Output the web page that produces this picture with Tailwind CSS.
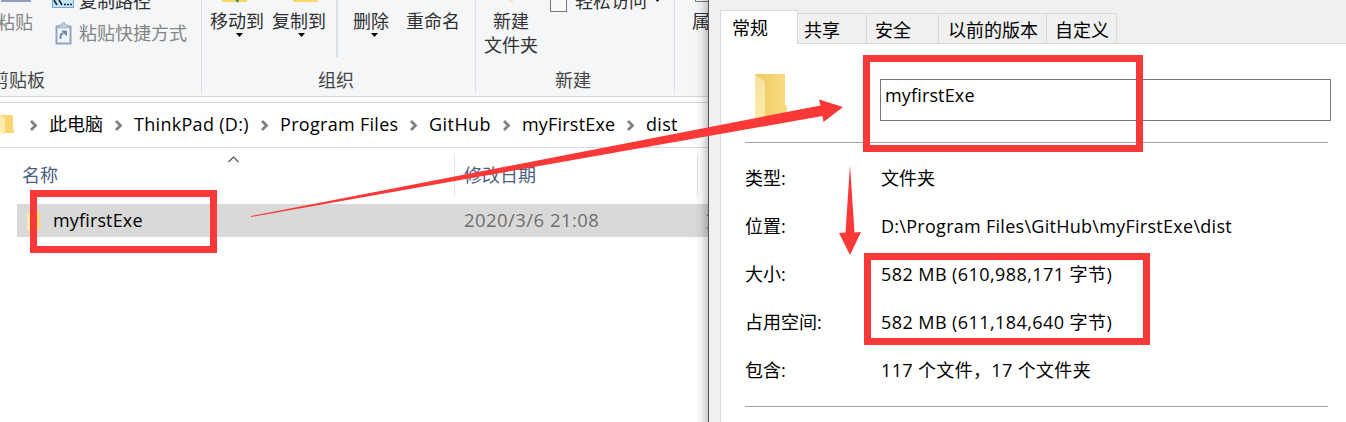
<!DOCTYPE html>
<html lang="zh-CN">
<head>
<meta charset="utf-8">
<title>myfirstExe</title>
<script src="https://cdn.jsdelivr.net/npm/@tailwindcss/browser@4"></script>
</head>
<body class="bg-white">
<div class="relative flex w-[1346px] h-[422px] overflow-hidden whitespace-nowrap font-['Open_Sans','Noto_Sans_CJK_SC',sans-serif] text-[18px] leading-6 text-black">

  <!-- Explorer window -->
  <main class="relative flex flex-col w-[708px] shrink-0 overflow-hidden bg-white">
    <section class="flex h-[97px] shrink-0 bg-[#f4f6f8] border-b border-[#d4d6d9] text-[#303030] overflow-hidden">
      <div class="flex flex-col w-[201px] shrink-0">
        <div class="flex h-[68px]">
          <div class="w-[54px] text-[#858585]">
            <div class="ml-[1px] w-[30px] h-[2px] bg-[#929fb7]"></div>
            <div class="-ml-[3px] mt-[8px]">粘贴</div>
          </div>
          <div>
            <div class="flex h-[15px] items-start -ml-[2px]">
              <svg class="shrink-0" width="22" height="9" viewBox="0 0 22 9"><rect x=".5" y="-4" width="21" height="11.5" fill="#c5e3fb" stroke="#75a9d6"/><path d="M2 0l3 5M7 0l3 5" stroke="#16263c" stroke-width="1.6"/><path d="M12 4.500h2M15 4.500h2M18 4.500h2" stroke="#16263c" stroke-width="1.6"/></svg>
              <span class="-mt-[11px] ml-[5px]">复制路径</span>
            </div>
            <div class="flex h-[38px] items-center text-[#858585]">
              <svg class="shrink-0 ml-[1px] -mt-[2px]" width="17" height="24" viewBox="0 0 17 24"><path d="M1.500 5.500h14v17h-14z" fill="#f2f6fc" stroke="#93a3be" stroke-width="2"/><path d="M4 7V4h2.500l1-2.500h2L10.500 4H13v3z" fill="#c4ccda" stroke="#93a3be" stroke-width=".7"/><path d="M5.500 18v-3q0-2.500 3-2.500" fill="none" stroke="#7089ad" stroke-width="2"/><path d="M6 9.500h6v6z" fill="#7089ad"/></svg>
              <span class="ml-[7px] -mt-[2px]">粘贴快捷方式</span>
            </div>
          </div>
        </div>
        <div class="-ml-[9px] text-[#444]">剪贴板</div>
      </div>
      <div class="w-px h-[94px] bg-[#dfe1e4] shrink-0"></div>
      <div class="flex flex-col w-[273px] shrink-0">
        <div class="flex h-[68px]">
          <div class="flex flex-col ml-[8px] w-[54px]">
            <svg class="ml-[12px]" width="26" height="3" viewBox="0 0 26 3"><path d="M0 0h25v2H0z" fill="#f9d865"/><path d="M13 0h4l-1 3z" fill="#428b58"/></svg>
            <div class="mt-[6px]">移动到</div>
            <svg class="ml-[26px]" width="7" height="4" viewBox="0 0 7 4"><path d="M0 0h7L3.500 4z"/></svg>
          </div>
          <div class="flex flex-col ml-[8px] w-[54px]">
            <svg class="ml-[21px]" width="26" height="3" viewBox="0 0 26 3"><path d="M0 0h25v2H0z" fill="#f9d865"/></svg>
            <div class="mt-[6px]">复制到</div>
            <svg class="ml-[26px]" width="7" height="4" viewBox="0 0 7 4"><path d="M0 0h7L3.500 4z"/></svg>
          </div>
          <div class="ml-[10px] w-[2px] h-[57px] bg-[#dcdfe2]"></div>
          <div class="flex flex-col ml-[15px] mt-[9px] w-[36px]">
            <div>删除</div>
            <svg class="ml-[18px]" width="7" height="4" viewBox="0 0 7 4"><path d="M0 0h7L3.500 4z"/></svg>
          </div>
          <div class="ml-[17px] mt-[9px]">重命名</div>
        </div>
        <div class="pl-[116px] text-[#444]">组织</div>
      </div>
      <div class="w-px h-[94px] bg-[#dfe1e4] shrink-0"></div>
      <div class="flex flex-col w-[198px] shrink-0">
        <div class="flex h-[68px]">
          <div class="ml-[8px] w-[54px] text-center">
            <div class="mx-auto mt-0 h-[2px] w-[4px] bg-[#f6e4bd]"></div>
            <div class="mt-[7px]">新建</div>
            <div>文件夹</div>
          </div>
          <div class="flex ml-[12px] items-start">
            <div class="-mt-[5px] w-[17px] h-[17px] border border-[#777] bg-[#fafafa]"></div>
            <div class="-mt-[11px] ml-[8px]">轻松访问</div>
            <svg class="-mt-[2px] ml-[7px]" width="7" height="4" viewBox="0 0 7 4"><path d="M0 0h7L3.500 4z"/></svg>
          </div>
        </div>
        <div class="pl-[79px] text-[#444]">新建</div>
      </div>
      <div class="w-px h-[94px] bg-[#dfe1e4] shrink-0"></div>
      <div class="pl-[17px]">
        <div class="ml-[3px] w-[17px] h-[2px] border-b border-l border-[#777]"></div>
        <div class="mt-[7px]">属性</div>
      </div>
    </section>

    <!-- Address bar -->
    <nav class="mt-[5px] flex h-[46px] shrink-0 items-center border-y border-[#d9d9d9] tracking-[.3px]">
      <svg width="15" height="22" viewBox="0 0 15 22"><path d="M0 1h12q1 0 1 1v13l1 1v3H0z" fill="#f7d774"/><path d="M0 1l5 3v17L0 19z" fill="#ffebad"/></svg>
      <svg class="ml-[15px]" width="8" height="11" viewBox="0 0 8 11"><path d="M1 1l4.500 4.500L1 10" fill="none" stroke="#808080" stroke-width="2.800"/></svg>
      <span class="ml-[11px] -mt-[2px] w-[54px] tracking-normal">此电脑</span>
      <svg class="ml-[12px]" width="8" height="11" viewBox="0 0 8 11"><path d="M1 1l4.500 4.500L1 10" fill="none" stroke="#808080" stroke-width="2.800"/></svg>
      <span class="ml-[11px] -mt-[2px] w-[115px]">ThinkPad (D:)</span>
      <svg class="ml-[12px]" width="8" height="11" viewBox="0 0 8 11"><path d="M1 1l4.500 4.500L1 10" fill="none" stroke="#808080" stroke-width="2.800"/></svg>
      <span class="ml-[11px] -mt-[2px] w-[118px]">Program Files</span>
      <svg class="ml-[12px]" width="8" height="11" viewBox="0 0 8 11"><path d="M1 1l4.500 4.500L1 10" fill="none" stroke="#808080" stroke-width="2.800"/></svg>
      <span class="ml-[11px] -mt-[2px] w-[62px] tracking-[.45px]">GitHub</span>
      <svg class="ml-[12px]" width="8" height="11" viewBox="0 0 8 11"><path d="M1 1l4.500 4.500L1 10" fill="none" stroke="#808080" stroke-width="2.800"/></svg>
      <span class="ml-[11px] -mt-[2px] w-[93px] tracking-[.2px]">myFirstExe</span>
      <svg class="ml-[12px]" width="8" height="11" viewBox="0 0 8 11"><path d="M1 1l4.500 4.500L1 10" fill="none" stroke="#808080" stroke-width="2.800"/></svg>
      <span class="ml-[11px] -mt-[2px]">dist</span>
    </nav>

    <!-- Column headers -->
    <div class="flex h-[56px] shrink-0 text-[#4a607e] *:shrink-0">
      <div class="w-[206px] pl-[22px] pt-[15px]">名称</div>
      <svg class="ml-[22px] mt-[8px]" width="11" height="7" viewBox="0 0 11 7"><path d="M.5 6L5.500 1l5 5" fill="none" stroke="#555" stroke-width="1.200"/></svg>
      <div class="ml-[215px] mt-[7px] h-[41px] w-px bg-[#e2e2e2]"></div>
      <div class="w-[242px] pl-[9px] pt-[15px]">修改日期</div>
      <div class="mt-[7px] h-[41px] w-px bg-[#e2e2e2]"></div>
      <div class="w-[10px] overflow-hidden pl-[9px] pt-[15px]">类型</div>
    </div>
    <div class="ml-[17px] flex h-[33px] shrink-0 items-center bg-[#d9d9d9] *:shrink-0">
      <svg class="ml-[9px]" width="15" height="22" viewBox="0 0 15 22"><path d="M1 2h13v18H1z" fill="#f9da7c"/><path d="M1 2l4 3v17l-4-2z" fill="#ffebad"/></svg>
      <span class="ml-[12px] -mt-[2px] w-[411px] tracking-[.15px]">myfirstExe</span>
      <span class="w-[242px] -mt-[2px] text-[18.5px] text-[#707070] tracking-[.45px]">2020/3/6 21:08</span>
      <span class="-mt-[2px] w-[2px] overflow-hidden text-[#707070]">文件夹</span>
    </div>
    <div class="absolute inset-y-0 right-0 w-[14px] bg-linear-to-r from-black/0 via-black/5 to-black/20"></div>
  </main>

  <!-- Properties dialog -->
  <aside class="flex flex-col w-[638px] shrink-0 bg-[#f0f0f0] border-l border-[#555] pl-[11px]">
    <div class="flex h-[44px] shrink-0 items-end">
      <div class="h-[34px] w-[78px] border border-b-0 border-[#dadada] bg-white pl-[11px] pt-[5px]">常规</div>
      <div class="flex h-[31px] flex-1 border-b border-[#dadada]">
        <div class="w-[69px] border-t border-r border-[#dadada] pl-[6px] pt-[4px]">共享</div>
        <div class="w-[72px] border-t border-r border-[#dadada] pl-[8px] pt-[4px]">安全</div>
        <div class="w-[108px] border-t border-r border-[#dadada] pl-[9px] pt-[4px]">以前的版本</div>
        <div class="w-[70px] border-t border-r border-[#dadada] pl-[8px] pt-[4px]">自定义</div>
      </div>
    </div>
    <div class="flex flex-1 flex-col border-l border-[#dadada] bg-white pl-[24px]">
      <div class="flex h-[98px] shrink-0">
        <svg class="ml-[10px] mt-[29px]" width="33" height="56" viewBox="0 0 33 56">
          <defs><linearGradient id="f" x2="1" y2="0"><stop stop-color="#eec95f"/><stop offset="1" stop-color="#f9dc84"/></linearGradient><linearGradient id="g" x2="0" y2="1"><stop stop-color="#f5e0a0"/><stop offset="1" stop-color="#ffecae"/></linearGradient></defs>
          <path d="M0 1h30v30l2 2v13H0z" fill="url(#f)"/><path d="M0 1l10 8v46L0 46z" fill="url(#g)"/>
        </svg>
        <div class="ml-[92px] mt-[35px] h-[42px] w-[451px] border border-[#777] pl-[4px] pt-[3px] tracking-[.15px]">myfirstExe</div>
      </div>
      <div class="h-px w-[583px] shrink-0 bg-[#a0a0a0]"></div>
      <dl class="mt-[12px] grid grid-cols-[136px_1fr] auto-rows-[48px] h-[251px] shrink-0 *:pt-[11px]">
        <dt>类型:</dt><dd>文件夹</dd>
        <dt>位置:</dt><dd class="tracking-[.28px]">D:\Program Files\GitHub\myFirstExe\dist</dd>
        <dt>大小:</dt><dd class="tracking-[.43px]">582 MB (610,988,171 字节)</dd>
        <dt>占用空间:</dt><dd class="tracking-[.43px]">582 MB (611,184,640 字节)</dd>
        <dt>包含:</dt><dd class="tracking-[.35px]">117 个文件，17 个文件夹</dd>
      </dl>
      <div class="h-px w-[583px] shrink-0 bg-[#a0a0a0]"></div>
    </div>
  </aside>

  <!-- Red annotations -->
  <svg class="absolute inset-0" width="1346" height="422" viewBox="0 0 1346 422">
    <g fill="none" stroke="#fb3838" stroke-width="7">
      <rect x="33.500" y="193.500" width="180" height="56"/>
      <rect x="866.500" y="58.500" width="273" height="90"/>
      <rect x="867.500" y="256.500" width="279" height="85"/>
    </g>
    <g fill="#fb3838">
      <path d="M251 216L820.500 105.500 819 99.500 843 107 823.500 122 822.500 116 251 217z"/>
      <path d="M850 165L854.500 232.500 861 232 850 255 839 233 845.500 232.500z"/>
    </g>
  </svg>
</div>
</body>
</html>
